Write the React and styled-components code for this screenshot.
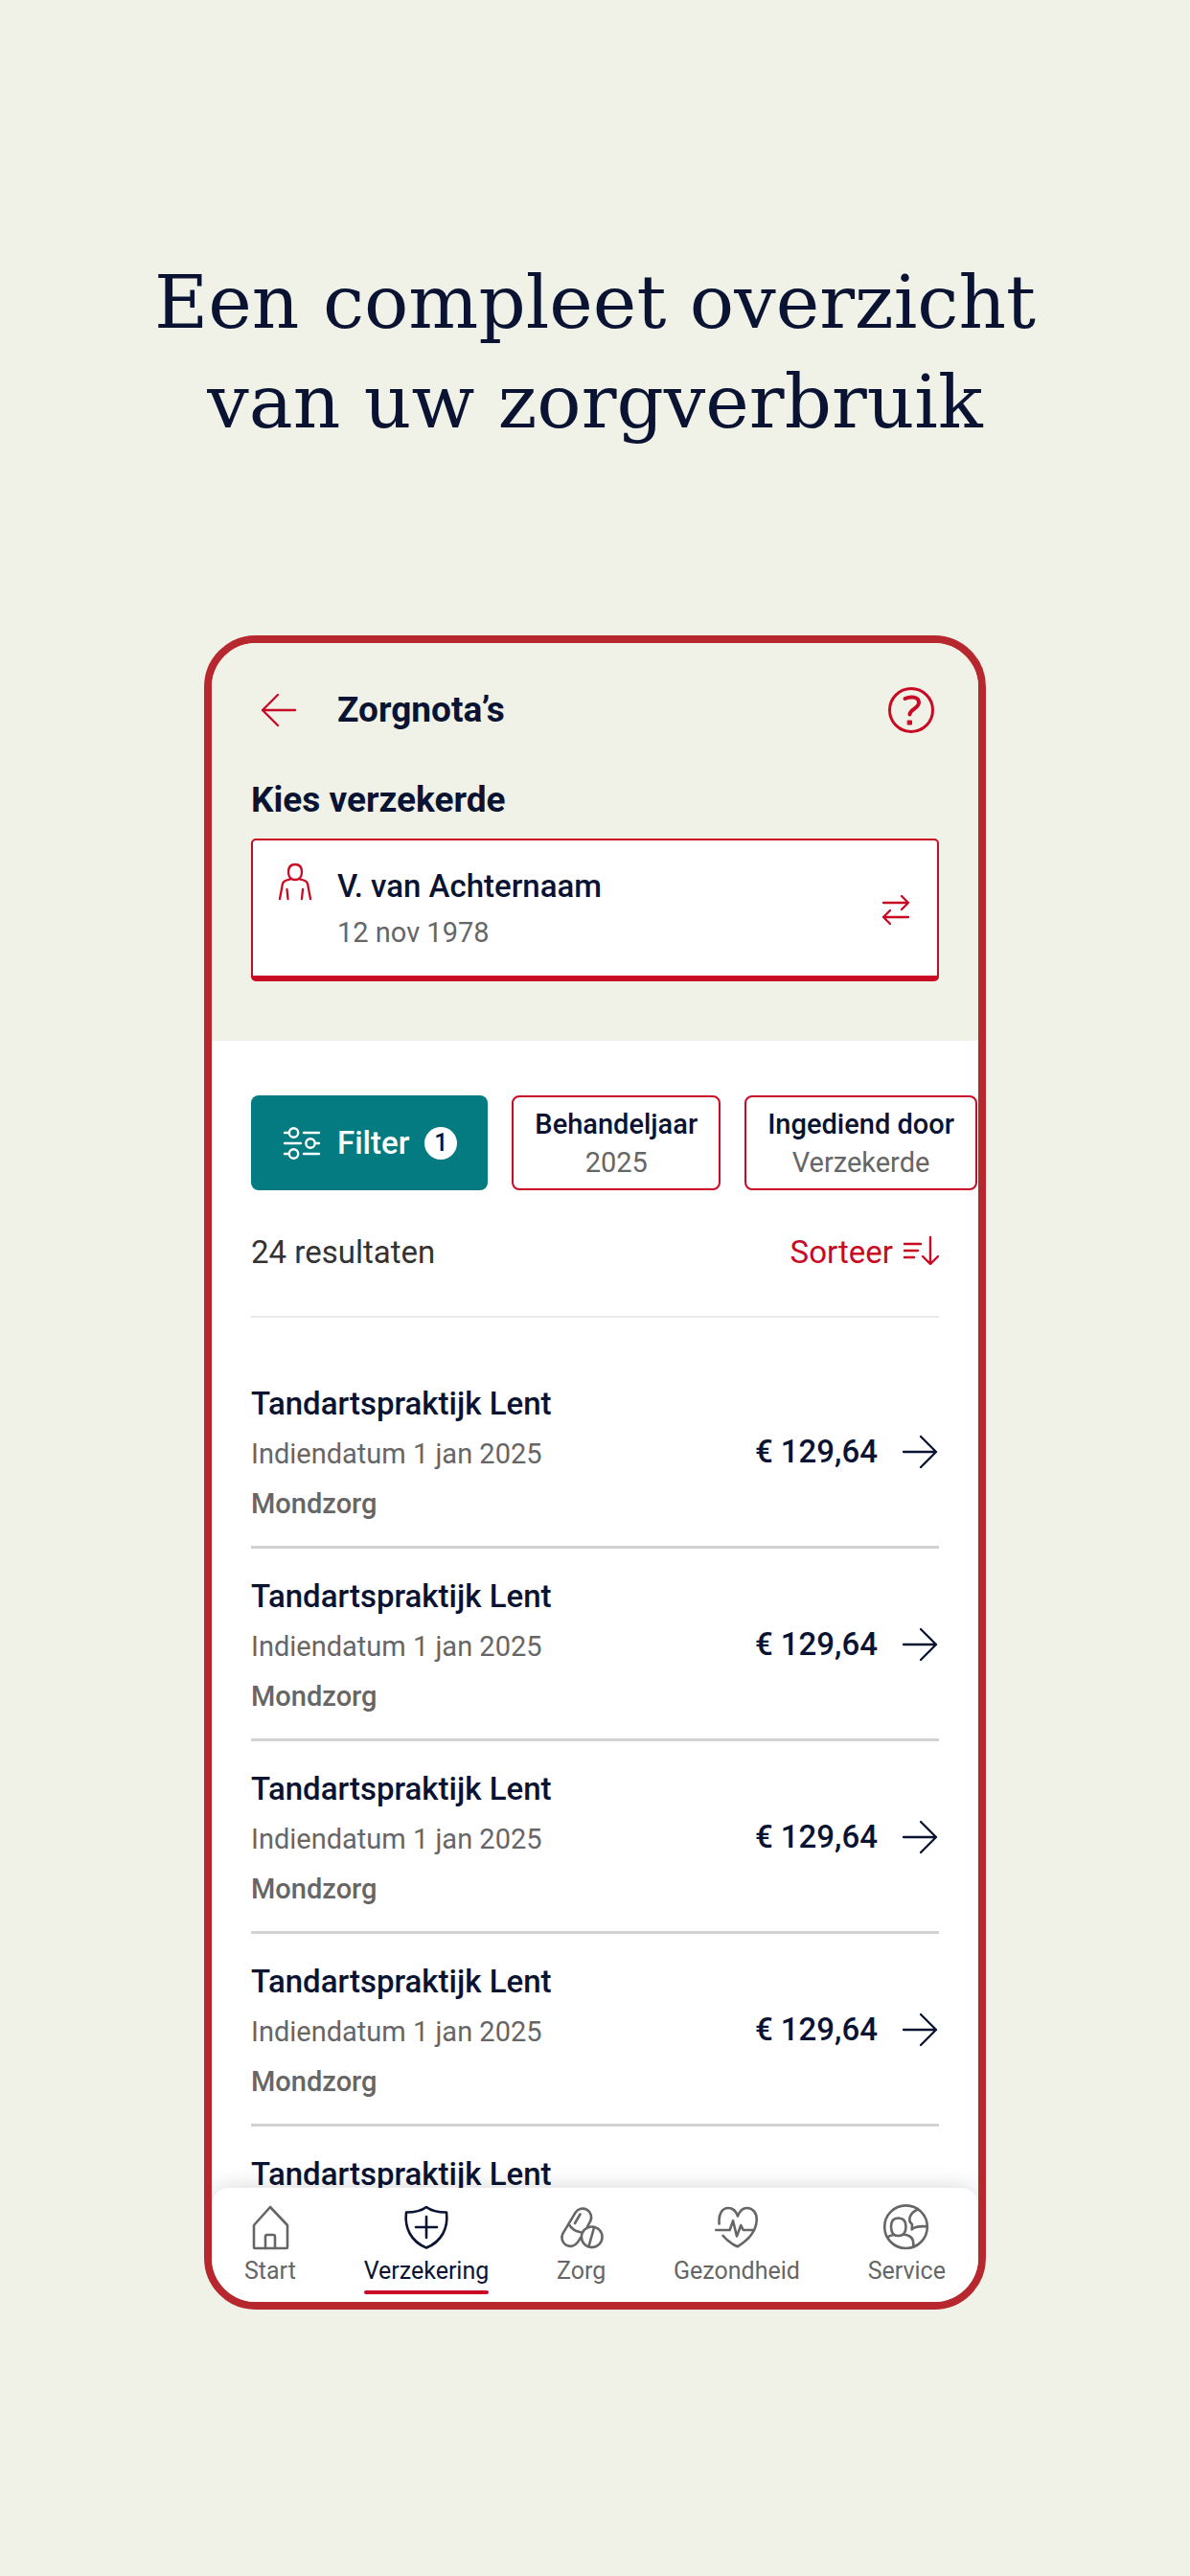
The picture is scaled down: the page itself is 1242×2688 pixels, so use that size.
import React from "react";
import styled, { createGlobalStyle } from "styled-components";

const navy = "#0a1432";
const red = "#c90a24";
const grey = "#666666";
const sand = "#f0f1e7";

const GlobalStyle = createGlobalStyle`
  * {
    box-sizing: border-box;
  }

  body {
    margin: 0;
    background-color: ${sand};
    color: ${navy};
    font-family: Roboto, "Liberation Sans", sans-serif;
  }

  button {
    font-family: inherit;
    cursor: pointer;
  }
`;

const Page = styled.div`
  display: flex;
  flex-direction: column;
  align-items: center;
  height: 100vh;
  padding: 264px 0 278px;
`;

const Headline = styled.h1`
  margin: 0 0 191px;
  font-family: "Roboto Slab", "DejaVu Serif", serif;
  font-size: 77px;
  font-weight: 400;
  line-height: 104px;
  text-align: center;
`;

const Phone = styled.main`
  display: flex;
  flex: 1;
  flex-direction: column;
  width: 100%;
  max-width: 816px;
  min-height: 0;
  border: 8px solid #b7282e;
  border-radius: 54px;
  background-color: #fff;
  overflow: hidden;
`;

const Top = styled.header`
  padding: 40px 41px 62px;
  background-color: ${sand};
`;

const TitleBar = styled.div`
  display: flex;
  align-items: center;
  height: 60px;
  margin-bottom: 42px;
`;

const IconButton = styled.button`
  display: flex;
  padding: 0;
  border: none;
  background: none;
  color: ${red};
`;

const Title = styled.h2`
  flex: 1;
  margin: 0 0 0 30px;
  font-size: 37px;
  font-weight: 700;
  line-height: 44px;
`;

const Label = styled.h3`
  margin: 0 0 18px;
  font-size: 37px;
  font-weight: 700;
  line-height: 44px;
`;

const PersonCard = styled.button`
  display: flex;
  align-items: center;
  width: 100%;
  height: 149px;
  padding: 2px 28px 0 26px;
  border: 2px solid ${red};
  border-bottom-width: 6px;
  border-radius: 5px;
  background-color: #fff;
  color: ${red};
  text-align: left;

  > svg:first-child {
    align-self: flex-start;
    margin-top: 20px;
  }
`;

const PersonText = styled.span`
  display: flex;
  flex: 1;
  flex-direction: column;
  gap: 8px;
  margin-left: 26px;
`;

const Strong = styled.span`
  color: ${navy};
  font-size: 33px;
  font-weight: 500;
  line-height: 40px;
`;

const Muted = styled.span`
  color: ${grey};
  font-size: 29px;
  font-weight: ${(props) => (props.$bold ? 500 : 400)};
  line-height: 40px;
`;

const Filters = styled.div`
  display: flex;
  gap: 25px;
  padding: 57px 0 0 41px;
`;

const FilterButton = styled.button`
  display: flex;
  flex-shrink: 0;
  align-items: center;
  height: 99px;
  padding: 0 32px;
  border: none;
  border-radius: 8px;
  background-color: #037b80;
  color: #fff;
  font-size: 33px;
  font-weight: 500;

  span {
    margin: 0 16px;
  }
`;

const Count = styled.b`
  width: 34px;
  border-radius: 50%;
  background-color: #fff;
  color: ${navy};
  font-size: 25px;
  font-weight: 500;
  line-height: 34px;
`;

const Chip = styled.button`
  display: flex;
  flex-shrink: 0;
  flex-direction: column;
  align-items: center;
  justify-content: center;
  height: 99px;
  padding: 0 22px;
  border: 2px solid ${red};
  border-radius: 8px;
  background-color: #fff;
  color: ${navy};
  font-size: 29px;
  font-weight: 500;
  line-height: 40px;
`;

const Results = styled.div`
  display: flex;
  align-items: center;
  justify-content: space-between;
  margin: 0 41px;
  padding: 45px 0 46px;
  border-bottom: 2px solid #e8e8e8;
  color: #333;
  font-size: 33px;
  line-height: 40px;
`;

const SortButton = styled(IconButton)`
  align-items: center;
  gap: 10px;
  font-size: 33px;
  line-height: 40px;
`;

const List = styled.ul`
  flex: 1;
  min-height: 0;
  margin: 0;
  padding: 40px 41px 0;
  overflow: hidden;
  list-style: none;
`;

const Row = styled.a`
  display: flex;
  align-items: center;
  justify-content: space-between;
  height: 201px;
  padding-top: 2px;
  border-bottom: 3px solid #d2d2d2;
  color: ${navy};
  text-decoration: none;
`;

const RowText = styled.span`
  display: flex;
  flex-direction: column;
  gap: 12px;
  padding-top: 4px;
`;

const Amount = styled.span`
  display: flex;
  align-items: center;
  gap: 24px;
`;

const Nav = styled.nav`
  z-index: 1;
  display: flex;
  justify-content: space-between;
  height: 119px;
  padding: 0 34px;
  border-radius: 18px 18px 0 0;
  background-color: #fff;
  box-shadow: 0 0 24px rgba(0, 0, 0, 0.16);
`;

const NavItem = styled.a`
  display: flex;
  flex-direction: column;
  align-items: center;
  height: 111px;
  padding-top: 16px;
  color: ${(props) => (props.$active ? navy : grey)};
  font-size: 25px;
  line-height: 32px;
  text-decoration: none;

  &::after {
    content: "";
    width: 100%;
    height: 4px;
    margin-top: auto;
    border-radius: 2px;
    background-color: ${(props) => (props.$active ? red : "transparent")};
  }

  svg {
    margin-bottom: 5px;
  }
`;

const Icon = ({ size = 50, width = size, stroke = 2, children }) => (
  <svg
    width={width}
    height={size}
    viewBox={`0 0 ${width} ${size}`}
    fill="none"
    stroke="currentColor"
    strokeWidth={stroke}
    strokeLinecap="round"
    strokeLinejoin="round"
    aria-hidden="true"
  >
    {children}
  </svg>
);

const BackIcon = () => (
  <Icon size={60} stroke={2.3}>
    <path d="M46 30H12M28 14L12 30L28 46" />
  </Icon>
);

const HelpIcon = () => (
  <Icon size={60} stroke={3}>
    <circle cx="31" cy="30" r="22.5" />
    <path d="M24.5 18C30 15.500 39 15.500 39 22C39 28.500 29.500 29 29.500 34.500" strokeWidth="4" />
    <rect x="27.500" y="41" width="4" height="4" fill="currentColor" strokeWidth="1" />
  </Icon>
);

const PersonIcon = () => (
  <Icon size={48} width={36} stroke={2.3}>
    <path d="M11 11C11 5 14 3 18 3C22 3 25 5 25 11C25 16 22 19 18 19C14 19 11 16 11 11Z" />
    <path d="M14 18C9 20 6 19 5 23L2 39M22 18C27 20 30 19 31 23L34 39M9.500 29L10.500 39M26 29L25 39" />
  </Icon>
);

const SwapIcon = () => (
  <Icon size={34} width={30} stroke={2.3}>
    <path d="M2 10H28M21 3L28 10L21 17M28 25H2M9 18L2 25L9 32" />
  </Icon>
);

const SlidersIcon = () => (
  <Icon size={36} width={42} stroke={2.4}>
    <path d="M3 7H7M23 7H39M3 18H20M35 18H39M3 29H7M23 29H39" />
    <circle cx="12.500" cy="7" r="4.700" />
    <circle cx="30" cy="18" r="4.700" />
    <circle cx="12.500" cy="29" r="4.700" />
  </Icon>
);

const SortIcon = () => (
  <Icon size={36} width={38} stroke={2.4}>
    <path d="M2 9H19M2 16H16M2 23H12M29 2V29M21 22L29 30L37 22" />
  </Icon>
);

const ArrowIcon = () => (
  <Icon size={40} stroke={2.3}>
    <path d="M3 20H37M21 4L37 20L21 36" />
  </Icon>
);

const HomeIcon = () => (
  <Icon stroke={2.6}>
    <path d="M8 23L25 4L43 23V46Q43 47 42 47H9Q8 47 8 46Z" />
    <path d="M20 47V35Q20 33 22 33H28Q30 33 30 35V47" />
  </Icon>
);

const ShieldIcon = () => (
  <Icon stroke={2.6}>
    <path d="M25 4Q32 9.500 46 9.500C48 26 41 40 25 46.500C9 40 2 26 4 9.500Q18 9.500 25 4Z" />
    <path d="M25 14V36M14 25H36" />
  </Icon>
);

const PillsIcon = () => (
  <Icon stroke={2.6}>
    <path d="M24 36L20.700 41.100A9 9 0 0 1 5.300 31.900L18.800 9.400A9 9 0 0 1 34.200 18.600L31 24.500" />
    <path d="M12 22.500Q16 29 24 30.300M18 21L23.500 11.500" />
    <circle cx="35.700" cy="35.300" r="10.800" />
    <path d="M38 25.500L32.500 45" />
  </Icon>
);

const HeartIcon = () => (
  <Icon stroke={2.6}>
    <path d="M6.700 21.500C5.500 10 10.500 5 16 5C21 5 24 8 26 13.500C28 8 31 5 35.700 5C41.500 5 46 10 45.700 17.500C45.300 30 36 39 25.700 45.300Q16.500 41 10.700 34" />
    <path d="M3.300 28H17.700L21 18.300L25 34.500L29.300 23L31.700 28H43" />
  </Icon>
);

const ServiceIcon = () => (
  <Icon stroke={2.6}>
    <circle cx="24.500" cy="24.700" r="22.300" />
    <path d="M9 24.500C9 18 12 15.500 16.500 15.500C21.500 15.500 24.500 18 24.500 24.500C24.500 31 21.500 34 16.500 34C12 34 9 31 9 24.500Z" />
    <path d="M5 35.500Q8 33.500 12 33M21.500 32.500C29 33.500 33 36 32.300 45M37 6.500C29 9.500 25.500 18 31 22L30.700 27.500Q34 23.500 46.500 24.300" />
  </Icon>
);

const claims = [1, 2, 3, 4, 5].map((id) => ({
  id,
  name: "Tandartspraktijk Lent",
  date: "Indiendatum 1 jan 2025",
  type: "Mondzorg",
  amount: "€ 129,64",
}));

const navItems = [
  { label: "Start", icon: <HomeIcon /> },
  { label: "Verzekering", icon: <ShieldIcon />, active: true },
  { label: "Zorg", icon: <PillsIcon /> },
  { label: "Gezondheid", icon: <HeartIcon /> },
  { label: "Service", icon: <ServiceIcon /> },
];

const App = () => {
  return (
    <Page>
      <GlobalStyle />
      <Headline>
        Een compleet overzicht
        <br />
        van uw zorgverbruik
      </Headline>
      <Phone>
        <Top>
          <TitleBar>
            <IconButton aria-label="Terug">
              <BackIcon />
            </IconButton>
            <Title>Zorgnota’s</Title>
            <IconButton aria-label="Help">
              <HelpIcon />
            </IconButton>
          </TitleBar>
          <Label id="person-label">Kies verzekerde</Label>
          <PersonCard aria-describedby="person-label">
            <PersonIcon />
            <PersonText>
              <Strong>V. van Achternaam</Strong>
              <Muted>12 nov 1978</Muted>
            </PersonText>
            <SwapIcon />
          </PersonCard>
        </Top>
        <Filters>
          <FilterButton>
            <SlidersIcon />
            <span>Filter</span>
            <Count>1</Count>
          </FilterButton>
          <Chip>
            Behandeljaar
            <Muted>2025</Muted>
          </Chip>
          <Chip>
            Ingediend door
            <Muted>Verzekerde</Muted>
          </Chip>
        </Filters>
        <Results>
          24 resultaten
          <SortButton>
            Sorteer
            <SortIcon />
          </SortButton>
        </Results>
        <List>
          {claims.map((claim) => (
            <li key={claim.id}>
              <Row href="#nota">
                <RowText>
                  <Strong>{claim.name}</Strong>
                  <Muted>{claim.date}</Muted>
                  <Muted $bold>{claim.type}</Muted>
                </RowText>
                <Amount>
                  <Strong>{claim.amount}</Strong>
                  <ArrowIcon />
                </Amount>
              </Row>
            </li>
          ))}
        </List>
        <Nav>
          {navItems.map((item) => (
            <NavItem key={item.label} href="#nav" $active={item.active}>
              {item.icon}
              {item.label}
            </NavItem>
          ))}
        </Nav>
      </Phone>
    </Page>
  );
};

export default App;
